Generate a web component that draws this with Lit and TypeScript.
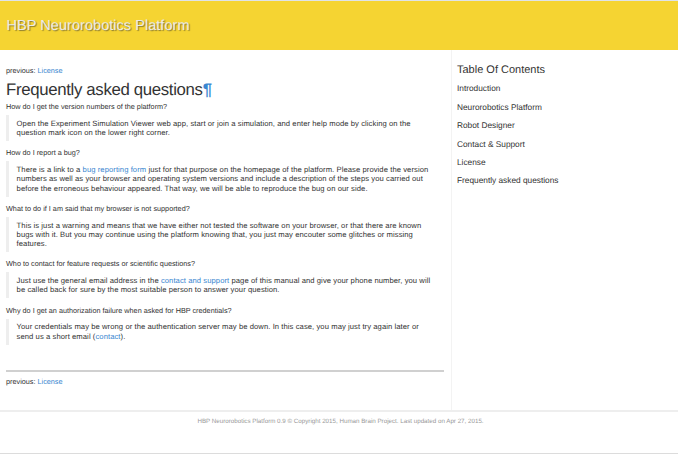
import { LitElement, html, css } from "lit";
import { customElement } from "lit/decorators.js";

const faq = [
  { q: "How do I get the version numbers of the platform?", a: [
    html`Open the Experiment Simulation Viewer web app, start or join a simulation, and enter help mode by clicking on the`,
    html`question mark icon on the lower right corner.`] },
  { q: "How do I report a bug?", a: [
    html`There is a link to a <a>bug reporting form</a> just for that purpose on the homepage of the platform. Please provide the version`,
    html`numbers as well as your browser and operating system versions and include a description of the steps you carried out`,
    html`before the erroneous behaviour appeared. That way, we will be able to reproduce the bug on our side.`] },
  { q: "What to do if I am said that my browser is not supported?", a: [
    html`This is just a warning and means that we have either not tested the software on your browser, or that there are known`,
    html`bugs with it. But you may continue using the platform knowing that, you just may encouter some glitches or missing`,
    html`features.`] },
  { q: "Who to contact for feature requests or scientific questions?", a: [
    html`Just use the general email address in the <a>contact and support</a> page of this manual and give your phone number, you will`,
    html`be called back for sure by the most suitable person to answer your question.`] },
  { q: "Why do I get an authorization failure when asked for HBP credentials?", a: [
    html`Your credentials may be wrong or the authentication server may be down. In this case, you may just try again later or`,
    html`send us a short email (<a>contact</a>).`] },
];

const toc = ["Introduction", "Neurorobotics Platform", "Robot Designer", "Contact & Support", "License", "Frequently asked questions"];

@customElement("app-root")
export class AppRoot extends LitElement {
  static styles = css`
    :host { display: flex; flex-direction: column; height: 454px; box-sizing: border-box; overflow: hidden;
      background: #fff; color: #333; border-top: 1px solid #dfe3e8; border-bottom: 1px solid #dcdcdc;
      font: 7.28px/9.27px "Liberation Sans", Arial, sans-serif; text-rendering: geometricPrecision; white-space: nowrap; }
    a { color: #3a87d0; }
    header { height: 49px; box-sizing: border-box; padding: 15.6px 6.5px 0; background: #f5d432;
      font-size: 14.6px; line-height: 19px; color: #eaeaea; text-shadow: 1px 1px 1px #8a7a30; }
    .columns { display: flex; height: 362px; border-bottom: 2px solid #eee; box-sizing: border-box; }
    main { width: 439px; padding: 16px 6px 0 6px; border-right: 1px solid #f3f3f3; }
    h1 { margin: 5px 0 2.9px; font-size: 16.8px; letter-spacing: -0.33px; line-height: 19px; font-weight: 400; }
    h1 a { font-weight: 700; }
    .question { height: 9.27px; }
    blockquote { margin: 3.7px 0 7.4px; padding: 3.7px 0 3.7px 7.6px; border-left: 3px solid #eee;
      font-size: 7.65px; letter-spacing: 0.068px; }
    .rule { width: 438px; height: 2px; margin: 25.3px 0 5.3px; background: #d0d0d0; }
    nav { padding: 13.3px 0 0 5px; }
    h2 { margin: 0 0 5px; font-size: 11px; line-height: 14px; font-weight: 400; }
    .entry { height: 18.45px; line-height: 12px; font-size: 8.3px; }
    footer { padding: 5px 0 0 3px; text-align: center; font-size: 6.23px; line-height: 10px; color: #999; }
  `;

  render() {
    return html`
      <header>HBP Neurorobotics Platform</header>
      <div class="columns">
        <main>
          <div>previous: <a>License</a></div>
          <h1>Frequently asked questions<a>¶</a></h1>
          ${faq.map((f) => html`<div class="question">${f.q}</div>
            <blockquote>${f.a.map((l) => html`<div>${l}</div>`)}</blockquote>`)}
          <div class="rule"></div>
          <div>previous: <a>License</a></div>
        </main>
        <nav>
          <h2>Table Of Contents</h2>
          ${toc.map((t) => html`<div class="entry">${t}</div>`)}
        </nav>
      </div>
      <footer>HBP Neurorobotics Platform 0.9 © Copyright 2015, Human Brain Project. Last updated on Apr 27, 2015.</footer>
    `;
  }
}
